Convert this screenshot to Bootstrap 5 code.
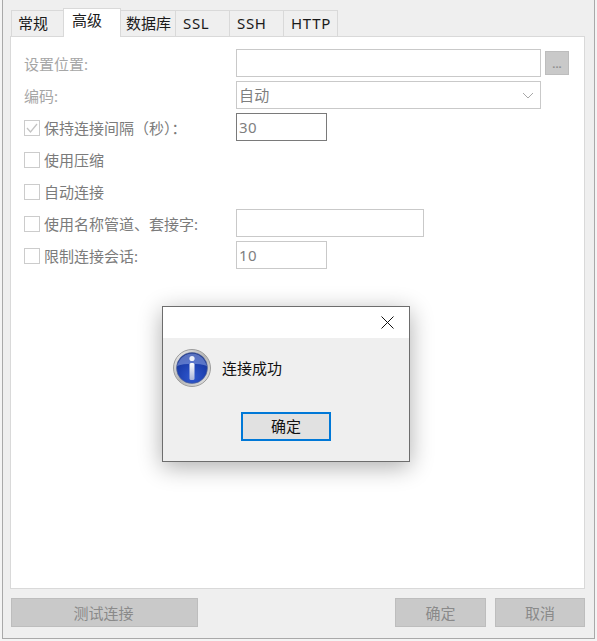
<!DOCTYPE html>
<html lang="zh">
<head>
<meta charset="utf-8">
<title>连接属性</title>
<link href="https://cdn.jsdelivr.net/npm/bootstrap@5.3.0/dist/css/bootstrap.min.css" rel="stylesheet">
<style>
html,body{height:641px;overflow:hidden;background:#f4f4f4}
body{font-family:"Noto Sans","Noto Sans CJK SC",sans-serif;font-size:15px;line-height:20px;color:#1a1a1a;padding:0 2px 2px 2px}
.win-frame{height:639px;background:#efefef;border:solid #a9a9a9;border-width:0 1px 1px 1px;padding:8px 9px 0 7px;position:relative}
.win-tabs{border:0;height:28px;padding-left:2px;align-items:flex-end;margin:0}
.win-tab{background:#efefef;border:1px solid #d9d9d9;border-bottom:0;height:26px;color:#1a1a1a;padding:2px 0 0 6px;margin:0 0 0 -1px;font-size:15px}
.win-tab.on{background:#fff;height:29px;margin-bottom:-1px;z-index:1;position:relative;padding:1px 0 0 8px}
.win-tab.tight{padding-left:5px}
.win-tab.latin{letter-spacing:.7px;padding-left:7px}
.w1{width:53px}.w2{width:58px}.w3{width:56px}.w4{width:55px}
.win-panel{height:553px;background:#fff;border:1px solid #d9d9d9;padding:12px 42px 0 13px;gap:4px}
.f-row{height:28px}
.f-label{width:212px;flex:none;color:#a6a6a6;padding-top:2px}
.f-check{width:212px;flex:none;color:#7b7b7b;gap:4px;padding-top:2px}
.f-box{width:16px;height:16px;border:1px solid #ccc;background:#fff;flex:none}
.f-input{height:28px;flex:none;border:1px solid #c9c9c9;background:#fff;color:#7f7f7f;padding:0 2px;font-size:15px;line-height:26px;letter-spacing:.3px}
.fw-wide{width:305px}.fw-mid{width:188px}.fw-small{width:91px}
.f-strong{border-color:#7a7a7a}
.dots-btn,.dots-btn:disabled{width:24px;height:24px;flex:none;margin:0 0 0 4px;background:#c9c9c9;border:1px solid #bdbdbd;color:#8f8f8f;font-weight:700;line-height:24px;padding:0;border-radius:0;font-size:11px;opacity:1}
.win-foot{padding:9px 0 0 1px}
.g-btn{height:29px;background:#c9c9c9;border:1px solid #bdbdbd;border-radius:0;color:#8a8a8a;padding:0;font-size:15px;line-height:26px}
.g-btn:disabled{background:#c9c9c9;border-color:#bdbdbd;color:#8a8a8a;opacity:1}
.b-test{width:187px;padding-right:2px}.b-ok{width:91px;margin-right:9px}.b-cancel{width:90px}
.msg-box{position:absolute;left:159px;top:306px;width:248px;height:156px;background:#efefef;border:1px solid #6d6d6d;box-shadow:0 5px 22px rgba(0,0,0,.32)}
.msg-title{height:31px;background:#fff;padding-right:15px}
.msg-body{height:60px;padding-left:10px;gap:11px;color:#111}
.msg-icon{flex:none}
.msg-foot{padding-top:14px}
.msg-ok{width:90px;height:29px;background:#e1e1e1;border:2px solid #0078d7;border-radius:0;padding:0;color:#111;font-size:15px;line-height:23px}
</style>
</head>
<body>
<div class="win-frame d-flex flex-column">
  <ul class="nav nav-tabs win-tabs flex-nowrap">
    <li class="win-tab w1">常规</li>
    <li class="win-tab on w2">高级</li>
    <li class="win-tab tight w3">数据库</li>
    <li class="win-tab latin w4">SSL</li>
    <li class="win-tab latin w4">SSH</li>
    <li class="win-tab latin w4">HTTP</li>
  </ul>
  <div class="win-panel d-flex flex-column">
    <div class="f-row d-flex align-items-center"><span class="f-label">设置位置:</span><div class="f-input fw-wide"></div><button class="btn dots-btn" disabled>...</button></div>
    <div class="f-row d-flex align-items-center"><span class="f-label">编码:</span><div class="f-input fw-wide d-flex align-items-center justify-content-between"><span>自动</span><svg width="12" height="7" viewBox="0 0 12 7" class="me-1"><path d="M1 1l5 5 5-5" fill="none" stroke="#a8a8a8"/></svg></div></div>
    <div class="f-row d-flex align-items-center"><label class="f-check d-flex align-items-center"><span class="f-box d-flex align-items-center justify-content-center"><svg width="12" height="12" viewBox="0 0 12 12"><path d="M1 6l3.500 4L11 2" fill="none" stroke="#c4c4c4" stroke-width="1.300"/></svg></span>保持连接间隔（秒）：</label><div class="f-input fw-small f-strong">30</div></div>
    <div class="f-row d-flex align-items-center"><label class="f-check d-flex align-items-center"><span class="f-box"></span>使用压缩</label></div>
    <div class="f-row d-flex align-items-center"><label class="f-check d-flex align-items-center"><span class="f-box"></span>自动连接</label></div>
    <div class="f-row d-flex align-items-center"><label class="f-check d-flex align-items-center"><span class="f-box"></span>使用名称管道、套接字:</label><div class="f-input fw-mid"></div></div>
    <div class="f-row d-flex align-items-center"><label class="f-check d-flex align-items-center"><span class="f-box"></span>限制连接会话:</label><div class="f-input fw-small">10</div></div>
  </div>
  <div class="win-foot d-flex">
    <button class="btn g-btn b-test me-auto" disabled>测试连接</button>
    <button class="btn g-btn b-ok" disabled>确定</button>
    <button class="btn g-btn b-cancel" disabled>取消</button>
  </div>
  <div class="msg-box" role="dialog">
    <div class="msg-title d-flex align-items-center justify-content-end">
      <svg width="13" height="13" viewBox="0 0 13 13"><path d="M.5.5l12 12M12.500.5l-12 12" stroke="#111" stroke-width="1" fill="none"/></svg>
    </div>
    <div class="msg-body d-flex align-items-center">
      <svg class="msg-icon" width="38" height="38" viewBox="0 0 38 38">
        <defs>
          <linearGradient id="ring" x1="0" y1="0" x2="1" y2="1"><stop offset="0" stop-color="#f4f4f4"/><stop offset=".5" stop-color="#b4b4b4"/><stop offset="1" stop-color="#eaeaea"/></linearGradient>
          <radialGradient id="ball" cx=".5" cy=".8" r=".8"><stop offset="0" stop-color="#2f58cf"/><stop offset=".6" stop-color="#1c3fae"/><stop offset="1" stop-color="#16308a"/></radialGradient>
          <linearGradient id="bar" x1="0" y1="0" x2="0" y2="1"><stop offset="0" stop-color="#fff"/><stop offset="1" stop-color="#a8b4d8"/></linearGradient>
        </defs>
        <circle cx="19" cy="19" r="18.500" fill="url(#ring)" stroke="#9c9c9c" stroke-width="1"/>
        <circle cx="19" cy="19" r="15.500" fill="url(#ball)" stroke="#5b6a94" stroke-width=".6"/>
        <path d="M4 17C7 8 13 4.500 19 4.500S31 8 34 17C26 14 12 14 4 17z" fill="#8fa6e6" opacity=".55"/>
        <circle cx="19" cy="9.500" r="2.600" fill="#eef1fa"/>
        <rect x="16.500" y="14" width="5" height="17" rx="1.500" fill="url(#bar)"/>
      </svg>
      <span>连接成功</span>
    </div>
    <div class="msg-foot d-flex justify-content-center">
      <button class="btn msg-ok">确定</button>
    </div>
  </div>
</div>
<script src="https://cdn.jsdelivr.net/npm/bootstrap@5.3.0/dist/js/bootstrap.bundle.min.js"></script>
</body>
</html>
